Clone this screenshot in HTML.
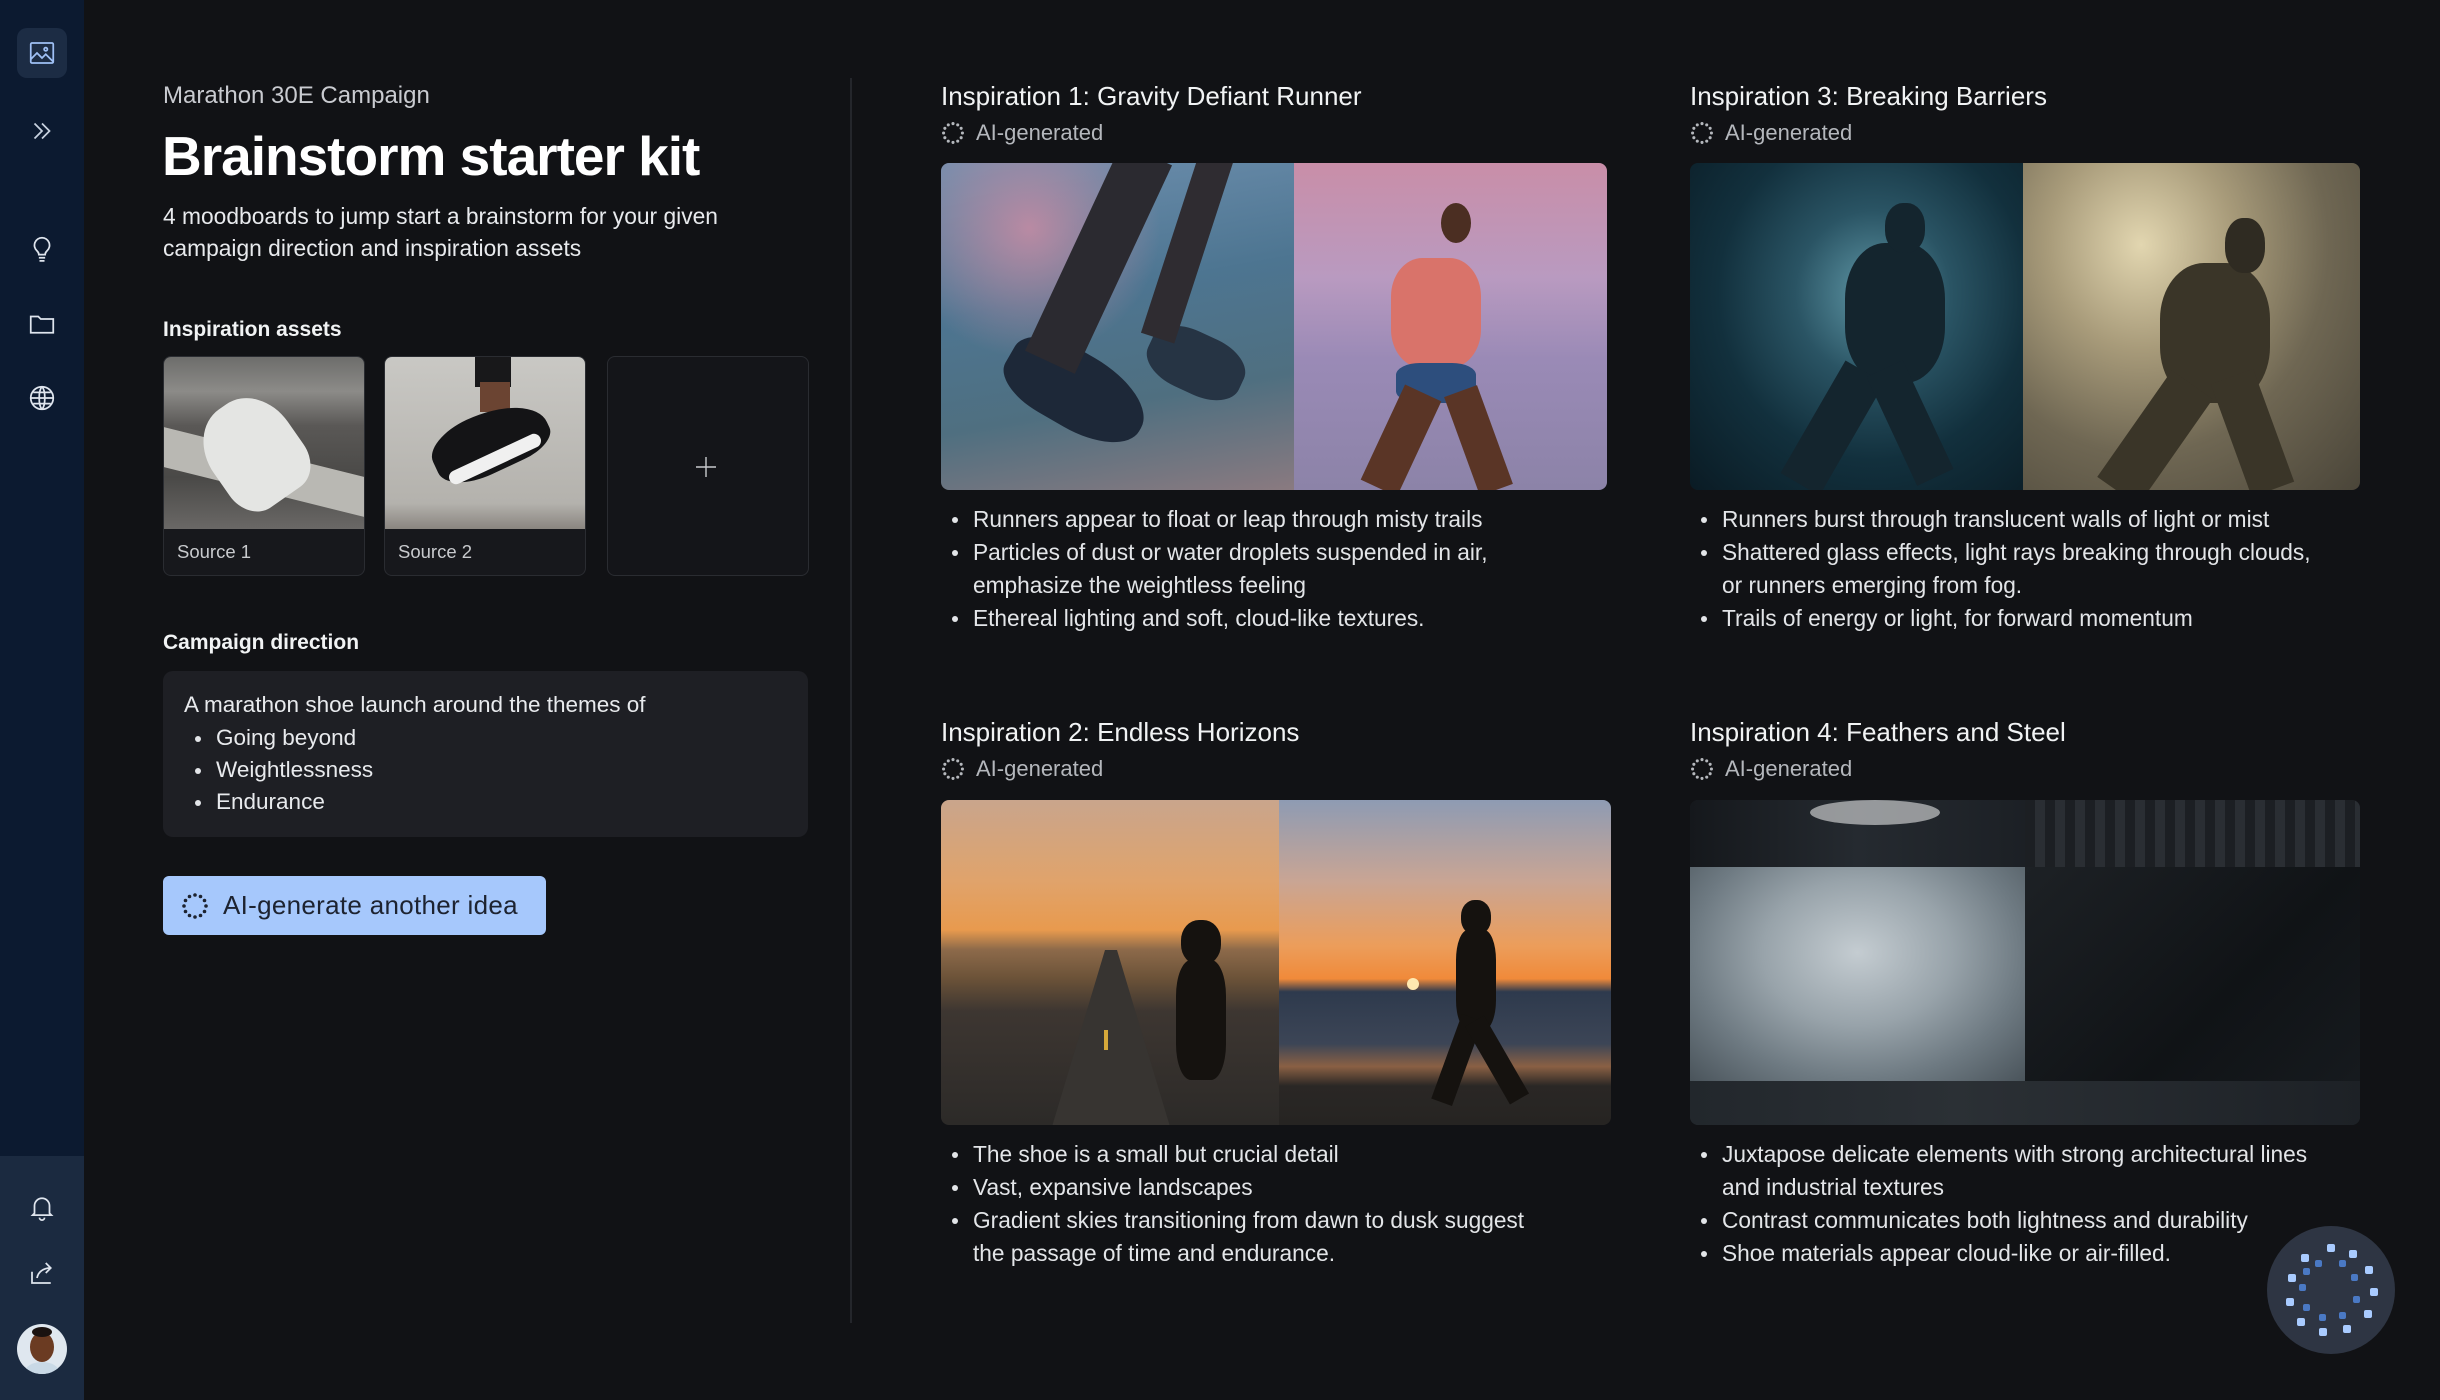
<!DOCTYPE html>
<html><head><meta charset="utf-8"><style>
*{margin:0;padding:0;box-sizing:border-box}
body{width:2440px;height:1400px;background:#111215;font-family:"Liberation Sans",sans-serif;color:#e8eaed;position:relative;overflow:hidden}
.a{position:absolute}
.sb{left:0;top:0;width:84px;height:1400px;background:#0c1a30}
.sbb{left:0;top:1156px;width:84px;height:244px;background:#1b2a40}
.ic{position:absolute;left:27px;width:30px;height:30px}
.t{position:absolute;white-space:nowrap}
.h{font-size:26px;color:#f1f3f4}
.ai{font-size:22px;color:#b4b7bc}
ul{position:absolute;list-style:none;font-size:22.7px;color:#e3e5e8;line-height:33px}
ul li{position:relative;padding-left:32px}
ul li:before{content:"";position:absolute;left:11px;top:14px;width:6px;height:6px;border-radius:50%;background:#e3e5e8}
.img{position:absolute;overflow:hidden;border-radius:8px}
.img>div{position:absolute;top:0;height:100%}
svg{display:block}
</style></head><body>
<div class="a sb"></div><div class="a sbb"></div>
<div class="a" style="left:17px;top:28px;width:50px;height:50px;border-radius:10px;background:#1c2c44"></div>
<svg class="ic" style="top:38px" viewBox="0 0 24 24" fill="none" stroke="#9fc0f5" stroke-width="1.4"><rect x="3" y="4" width="18" height="16" rx="1"/><path d="M3 17l5-5 4 4 3-3 6 6"/><circle cx="15" cy="9" r="1.3"/></svg>
<svg class="ic" style="top:116px" viewBox="0 0 24 24" fill="none" stroke="#c8d2e0" stroke-width="1.4"><path d="M6 6l6 6-6 6M12 6l6 6-6 6"/></svg>
<svg class="ic" style="top:234px" viewBox="0 0 24 24" fill="none" stroke="#dfe5ee" stroke-width="1.4"><path d="M12 3a6 6 0 0 0-4 10.5c1 1 1.5 2 1.5 3h5c0-1 .5-2 1.5-3A6 6 0 0 0 12 3zM9.5 19h5M10 21.5h4"/></svg>
<svg class="ic" style="top:309px" viewBox="0 0 24 24" fill="none" stroke="#dfe5ee" stroke-width="1.4"><path d="M3 6h6l2 2h10v11H3z"/></svg>
<svg class="ic" style="top:383px" viewBox="0 0 24 24" fill="none" stroke="#dfe5ee" stroke-width="1.4"><circle cx="12" cy="12" r="9"/><path d="M3 12h18M12 3c3 3 3 15 0 18M12 3c-3 3-3 15 0 18M5 7.5h14M5 16.5h14"/></svg>
<svg class="ic" style="top:1192px" viewBox="0 0 24 24" fill="none" stroke="#dfe5ee" stroke-width="1.4"><path d="M6 17V11a6 6 0 0 1 12 0v6l1.5 1.5h-15zM10 20.5a2 2 0 0 0 4 0"/></svg>
<svg class="ic" style="top:1258px" viewBox="0 0 24 24" fill="none" stroke="#dfe5ee" stroke-width="1.4"><path d="M4 11v9h15M8 16c1-5 5-8 11-8M15 4l4 4-4 4"/></svg>
<div class="a" style="left:17px;top:1324px;width:50px;height:50px;border-radius:50%;background:#dfe7ef;overflow:hidden"><div class="a" style="left:13px;top:8px;width:24px;height:30px;border-radius:50%;background:#6b3b22"></div><div class="a" style="left:15px;top:3px;width:20px;height:10px;border-radius:50%;background:#1a1210"></div><div class="a" style="left:8px;top:38px;width:34px;height:20px;border-radius:50%;background:#c9d9e6"></div></div>

<div class="t" style="left:163px;top:82px;font-size:24px;color:#c9cbd0">Marathon 30E Campaign</div>
<div class="t" style="left:162px;top:124px;font-size:55px;font-weight:bold;color:#fff;letter-spacing:-1px">Brainstorm starter kit</div>
<div class="t" style="left:163px;top:200px;font-size:22.8px;color:#e8eaed;line-height:32px">4 moodboards to jump start a brainstorm for your given<br>campaign direction and inspiration assets</div>
<div class="t" style="left:163px;top:318px;font-size:21px;font-weight:bold;color:#f1f3f4">Inspiration assets</div>

<div class="a" style="left:163px;top:356px;width:202px;height:220px;border:1.5px solid #2a2c31;border-radius:8px;background:#17181c;overflow:hidden">
 <div class="a" style="left:0;top:0;width:200px;height:172px;background:linear-gradient(180deg,#6d6d6b 0%,#8c8b88 20%,#5a5856 40%,#4a4947 70%,#6a6866 100%)"></div>
 <div class="a" style="left:0;top:95px;width:200px;height:40px;background:#b9b8b3;transform:skewY(14deg)"></div>
 <div class="a" style="left:45px;top:40px;width:90px;height:110px;border-radius:45% 45% 30% 30%;background:#e4e5e3;transform:rotate(-35deg)"></div>
 <div class="t" style="left:13px;top:184px;font-size:18.5px;color:#c8cacd">Source 1</div></div>
<div class="a" style="left:384px;top:356px;width:202px;height:220px;border:1.5px solid #2a2c31;border-radius:8px;background:#17181c;overflow:hidden">
 <div class="a" style="left:0;top:0;width:200px;height:172px;background:linear-gradient(180deg,#c9c8c4,#b4b2ad 85%,#8a8580)"></div>
 <div class="a" style="left:90px;top:0;width:36px;height:30px;background:#18181a"></div>
 <div class="a" style="left:95px;top:25px;width:30px;height:30px;background:#6b4432"></div>
 <div class="a" style="left:45px;top:55px;width:120px;height:60px;border-radius:40% 60% 30% 40%;background:#141416;transform:rotate(-25deg)"></div>
 <div class="a" style="left:60px;top:95px;width:100px;height:14px;border-radius:7px;background:#f0f0f0;transform:rotate(-25deg)"></div>
 <div class="t" style="left:13px;top:184px;font-size:18.5px;color:#c8cacd">Source 2</div></div>
<div class="a" style="left:607px;top:356px;width:202px;height:220px;border:1.5px solid #2a2c31;border-radius:8px;background:#141519"></div>
<svg class="a" style="left:694px;top:455px" width="24" height="24" viewBox="0 0 24 24" stroke="#c8cacd" stroke-width="1.4"><path d="M12 2v20M2 12h20"/></svg>

<div class="t" style="left:163px;top:631px;font-size:21px;font-weight:bold;color:#f1f3f4">Campaign direction</div>
<div class="a" style="left:163px;top:671px;width:645px;height:166px;border-radius:10px;background:#1e1f24"></div>
<div class="t" style="left:184px;top:692px;font-size:22.5px;color:#e8eaed">A marathon shoe launch around the themes of</div>
<ul style="left:184px;top:722px;font-size:22.5px;line-height:32px;color:#e8eaed"><li>Going beyond</li><li>Weightlessness</li><li>Endurance</li></ul>

<div class="a" style="left:163px;top:876px;width:383px;height:59px;border-radius:6px;background:#a6c8fc"></div>
<svg class="a" style="left:181px;top:892px" width="28" height="28" viewBox="0 0 28 28" fill="#1d2330"><g id="dots"><circle cx="14" cy="3" r="1.8"/><circle cx="19.5" cy="4.5" r="1.8"/><circle cx="23.5" cy="8.5" r="1.8"/><circle cx="25" cy="14" r="1.8"/><circle cx="23.5" cy="19.5" r="1.8"/><circle cx="19.5" cy="23.5" r="1.8"/><circle cx="14" cy="25" r="1.8"/><circle cx="8.5" cy="23.5" r="1.8"/><circle cx="4.5" cy="19.5" r="1.8"/><circle cx="3" cy="14" r="1.8"/><circle cx="4.5" cy="8.5" r="1.8"/><circle cx="8.5" cy="4.5" r="1.8"/></g></svg>
<div class="t" style="left:223px;top:890px;font-size:26px;color:#1d2330;letter-spacing:.3px">AI-generate another idea</div>

<div class="a" style="left:850px;top:78px;width:2px;height:1245px;background:#24262b"></div>

<div class="t h" style="left:941px;top:81px">Inspiration 1: Gravity Defiant Runner</div>
<svg class="a" style="left:941px;top:121px" width="24" height="24" viewBox="0 0 28 28" fill="#b4b7bc"><use href="#dots"/></svg>
<div class="t ai" style="left:976px;top:120px">AI-generated</div>
<div class="img" style="left:941px;top:163px;width:666px;height:327px">
 <div style="left:0;width:353px;background:radial-gradient(ellipse at 25% 20%,#b98aa3 0%,transparent 35%),linear-gradient(170deg,#6e8fae 0%,#4d7591 40%,#4f6f80 70%,#8a7a80 100%)"></div>
 <div class="a" style="left:60px;top:190px;width:150px;height:75px;border-radius:40% 50% 45% 35%;background:#1d2838;transform:rotate(30deg)"></div>
 <div class="a" style="left:205px;top:170px;width:100px;height:60px;border-radius:40%;background:#263444;transform:rotate(25deg)"></div>
 <div class="a" style="left:130px;top:-20px;width:55px;height:230px;background:#2b2a30;transform:rotate(25deg)"></div>
 <div class="a" style="left:230px;top:-20px;width:35px;height:200px;background:#2f2c31;transform:rotate(18deg)"></div>
 <div style="left:353px;width:313px;background:linear-gradient(180deg,#c98ea8 0%,#b99ac0 35%,#9a8ab6 60%,#8c83a8 100%)"></div>
 <div class="a" style="left:450px;top:95px;width:90px;height:110px;border-radius:35%;background:#d9736a"></div>
 <div class="a" style="left:500px;top:40px;width:30px;height:40px;border-radius:50%;background:#4b2e22"></div>
 <div class="a" style="left:455px;top:200px;width:80px;height:40px;border-radius:30%;background:#2d4e7d"></div>
 <div class="a" style="left:440px;top:225px;width:40px;height:105px;background:#5a3526;transform:rotate(25deg)"></div>
 <div class="a" style="left:520px;top:225px;width:35px;height:105px;background:#5a3526;transform:rotate(-20deg)"></div>
</div>
<ul style="left:941px;top:503px"><li>Runners appear to float or leap through misty trails</li><li>Particles of dust or water droplets suspended in air,<br>emphasize the weightless feeling</li><li>Ethereal lighting and soft, cloud-like textures.</li></ul>

<div class="t h" style="left:1690px;top:81px">Inspiration 3: Breaking Barriers</div>
<svg class="a" style="left:1690px;top:121px" width="24" height="24" viewBox="0 0 28 28" fill="#b4b7bc"><use href="#dots"/></svg>
<div class="t ai" style="left:1725px;top:120px">AI-generated</div>
<div class="img" style="left:1690px;top:163px;width:670px;height:327px">
 <div style="left:0;width:333px;background:radial-gradient(ellipse at 55% 40%,#5f97a6 0%,#2a5464 30%,#12303d 60%,#0a1b24 100%)"></div>
 <div class="a" style="left:155px;top:80px;width:100px;height:140px;border-radius:40%;background:#14252e"></div>
 <div class="a" style="left:195px;top:40px;width:40px;height:50px;border-radius:45%;background:#14252e"></div>
 <div class="a" style="left:120px;top:200px;width:45px;height:130px;background:#14252e;transform:rotate(30deg)"></div>
 <div class="a" style="left:200px;top:200px;width:40px;height:120px;background:#14252e;transform:rotate(-25deg)"></div>
 <div style="left:333px;width:337px;background:radial-gradient(ellipse at 35% 25%,#e2d6b0 0%,#a89b7a 30%,#6f6753 60%,#4a4539 100%)"></div>
 <div class="a" style="left:470px;top:100px;width:110px;height:140px;border-radius:40%;background:#3a3528"></div>
 <div class="a" style="left:535px;top:55px;width:40px;height:55px;border-radius:45%;background:#2f2b22"></div>
 <div class="a" style="left:440px;top:210px;width:50px;height:130px;background:#3a3528;transform:rotate(35deg)"></div>
 <div class="a" style="left:540px;top:210px;width:45px;height:120px;background:#3a3528;transform:rotate(-20deg)"></div>
</div>
<ul style="left:1690px;top:503px"><li>Runners burst through translucent walls of light or mist</li><li>Shattered glass effects, light rays breaking through clouds,<br>or runners emerging from fog.</li><li>Trails of energy or light, for forward momentum</li></ul>

<div class="t h" style="left:941px;top:717px">Inspiration 2: Endless Horizons</div>
<svg class="a" style="left:941px;top:757px" width="24" height="24" viewBox="0 0 28 28" fill="#b4b7bc"><use href="#dots"/></svg>
<div class="t ai" style="left:976px;top:756px">AI-generated</div>
<div class="img" style="left:941px;top:800px;width:670px;height:325px">
 <div style="left:0;width:338px;background:linear-gradient(180deg,#c9a58c 0%,#e0a36b 25%,#e89a4e 40%,#8d6a4a 46%,#6b5238 55%,#3d3631 65%,#2c2a28 100%)"></div>
 <div class="a" style="left:110px;top:150px;width:120px;height:180px;background:#373431;clip-path:polygon(45% 0,55% 0,100% 100%,0 100%)"></div>
 <div class="a" style="left:163px;top:230px;width:4px;height:20px;background:#d6a83a"></div>
 <div class="a" style="left:240px;top:120px;width:40px;height:45px;border-radius:45%;background:#15120f"></div>
 <div class="a" style="left:235px;top:160px;width:50px;height:120px;border-radius:30%;background:#15120f"></div>
 <div style="left:338px;width:332px;background:linear-gradient(180deg,#8e9bb3 0%,#c9a594 25%,#ec9d5a 45%,#f08a3a 55%,#2e3a4d 59%,#3c4556 75%,#8a6044 82%,#2a2725 88%,#262422 100%)"></div>
 <div class="a" style="left:466px;top:178px;width:12px;height:12px;border-radius:50%;background:#ffe9b0"></div>
 <div class="a" style="left:520px;top:100px;width:30px;height:35px;border-radius:45%;background:#15120f"></div>
 <div class="a" style="left:515px;top:130px;width:40px;height:100px;border-radius:30%;background:#15120f"></div>
 <div class="a" style="left:505px;top:215px;width:22px;height:90px;background:#15120f;transform:rotate(20deg)"></div>
 <div class="a" style="left:545px;top:215px;width:22px;height:90px;background:#15120f;transform:rotate(-30deg)"></div>
</div>
<ul style="left:941px;top:1138px"><li>The shoe is a small but crucial detail</li><li>Vast, expansive landscapes</li><li>Gradient skies transitioning from dawn to dusk suggest<br>the passage of time and endurance.</li></ul>

<div class="t h" style="left:1690px;top:717px">Inspiration 4: Feathers and Steel</div>
<svg class="a" style="left:1690px;top:757px" width="24" height="24" viewBox="0 0 28 28" fill="#b4b7bc"><use href="#dots"/></svg>
<div class="t ai" style="left:1725px;top:756px">AI-generated</div>
<div class="img" style="left:1690px;top:800px;width:670px;height:325px;background:#1a1d22">
 <div style="left:0;width:335px;height:67px;background:linear-gradient(90deg,#15181c,#252a30 50%,#1c2025)"></div>
 <div class="a" style="left:120px;top:0;width:130px;height:25px;border-radius:50%;background:#c7c9cb;opacity:.7"></div>
 <div class="a" style="left:335px;top:0;width:335px;height:67px;background:repeating-linear-gradient(90deg,#1c1f23 0 10px,#2a2e33 10px 20px)"></div>
 <div class="a" style="left:0;top:67px;width:335px;height:214px;background:radial-gradient(ellipse at 50% 40%,#c4ccd1 0%,#98a3aa 40%,#6e7a82 70%,#4a545b 100%)"></div>
 <div class="a" style="left:335px;top:67px;width:335px;height:214px;background:linear-gradient(135deg,#1d2125,#101316 60%,#161a1e)"></div>
 <div class="a" style="left:0;top:281px;width:670px;height:44px;background:linear-gradient(90deg,#22272c,#2b3035 40%,#1d2126)"></div>
</div>
<ul style="left:1690px;top:1138px"><li>Juxtapose delicate elements with strong architectural lines<br>and industrial textures</li><li>Contrast communicates both lightness and durability</li><li>Shoe materials appear cloud-like or air-filled.</li></ul>

<div class="a" style="left:2267px;top:1226px;width:128px;height:128px;border-radius:50%;background:#2e3543"></div>
<svg class="a" style="left:2279px;top:1238px" width="104" height="104" viewBox="0 0 104 104">
<g fill="#a9cbff"><rect x="48" y="6" width="8" height="8" rx="2"/><rect x="70" y="12" width="8" height="8" rx="2"/><rect x="86" y="28" width="8" height="8" rx="2"/><rect x="91" y="50" width="8" height="8" rx="2"/><rect x="85" y="72" width="8" height="8" rx="2"/><rect x="64" y="87" width="8" height="8" rx="2"/><rect x="40" y="90" width="8" height="8" rx="2"/><rect x="18" y="80" width="8" height="8" rx="2"/><rect x="7" y="60" width="8" height="8" rx="2"/><rect x="9" y="36" width="8" height="8" rx="2"/><rect x="22" y="16" width="8" height="8" rx="2"/></g>
<g fill="#4a79c4"><rect x="36" y="22" width="7" height="7" rx="2"/><rect x="60" y="22" width="7" height="7" rx="2"/><rect x="72" y="36" width="7" height="7" rx="2"/><rect x="74" y="58" width="7" height="7" rx="2"/><rect x="60" y="74" width="7" height="7" rx="2"/><rect x="40" y="76" width="7" height="7" rx="2"/><rect x="24" y="66" width="7" height="7" rx="2"/><rect x="20" y="46" width="7" height="7" rx="2"/><rect x="24" y="30" width="7" height="7" rx="2"/></g></svg>
</body></html>
